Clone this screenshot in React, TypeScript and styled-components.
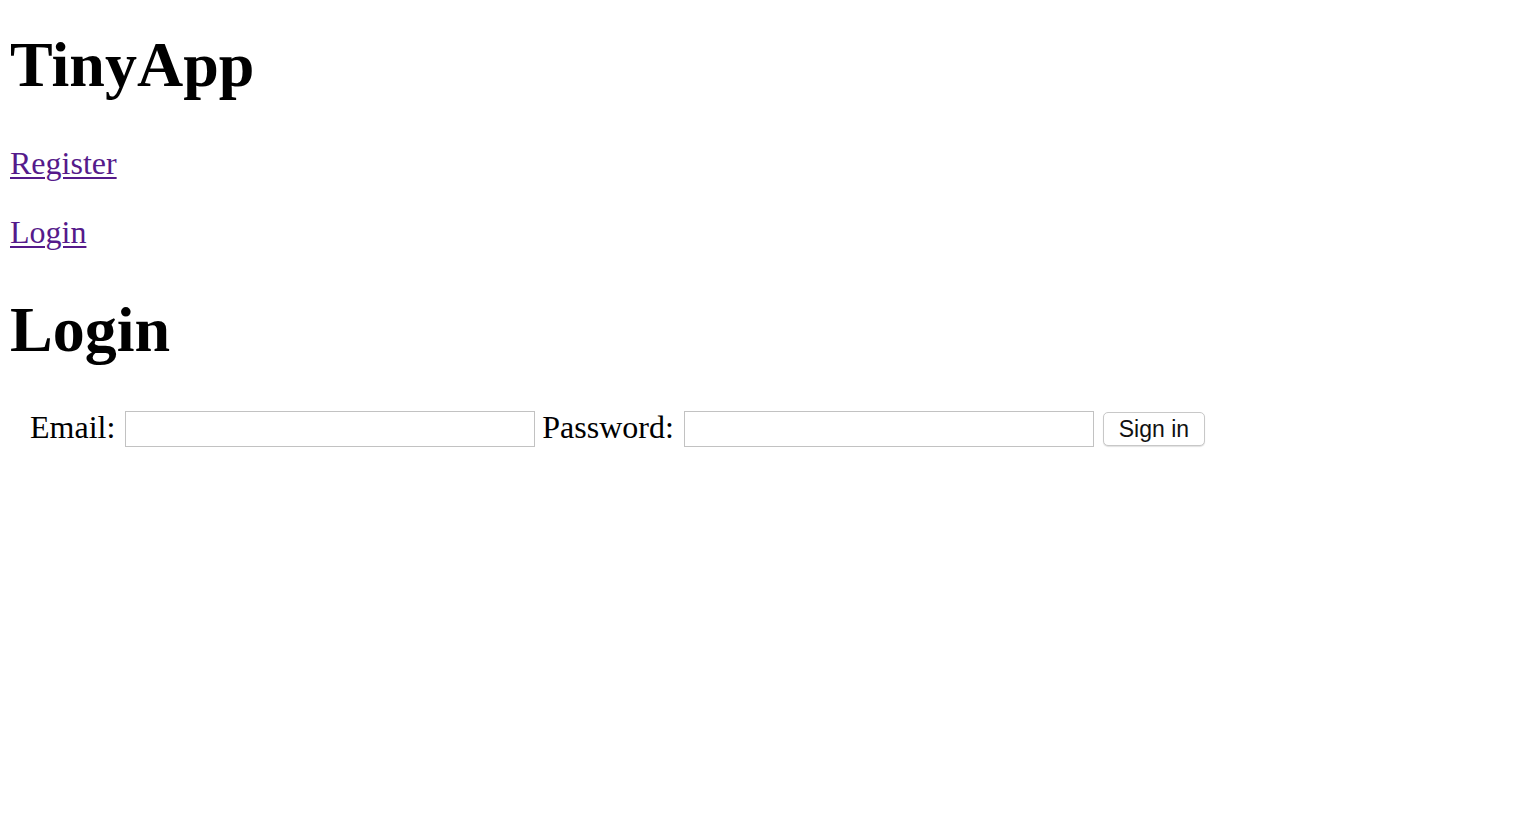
import React from "react";
import styled, { createGlobalStyle } from "styled-components";

const GlobalStyle = createGlobalStyle`
  html, body {
    margin: 0;
    padding: 0;
    background: #ffffff;
  }
  body {
    font-family: "Liberation Serif", "Times New Roman", serif;
    color: #000000;
  }
`;

const Page = styled.div`
  padding: 1px 10px 0;
  font-size: 32px;
`;

const Heading = styled.h1<{ $top: number; $bottom: number }>`
  font-size: 64px;
  font-weight: bold;
  margin: ${(p) => p.$top}px 0 ${(p) => p.$bottom}px;
  line-height: normal;
`;

const NavItem = styled.p`
  margin: 32px 0;
  line-height: normal;
`;

const NavLink = styled.a`
  color: #551a8b;
  text-decoration: underline;
  text-underline-offset: 3px;
  text-decoration-thickness: 2px;
`;

const LoginForm = styled.form`
  display: flex;
  align-items: center;
  padding-left: 20px;
  margin: 0;
`;

const FieldLabel = styled.label`
  font-size: 32px;
  margin: 0 10px 4px 0;
  line-height: 36px;
`;

const TextInput = styled.input`
  box-sizing: border-box;
  width: 410px;
  height: 36px;
  margin: 0 7px 0 0;
  padding: 2px 6px;
  border: 1px solid #c2c2c2;
  background: #ffffff;
  font-size: 20px;
  outline: none;
`;

const SignInButton = styled.button`
  box-sizing: border-box;
  width: 102px;
  height: 34px;
  margin-left: 2px;
  padding: 0 8px;
  border: 1px solid #c8c8c8;
  border-radius: 5px;
  background: #ffffff;
  box-shadow: 0 1px 1px rgba(0, 0, 0, 0.12);
  font-family: "Liberation Sans", Arial, sans-serif;
  font-size: 23px;
  color: #111111;
  cursor: pointer;
`;

export default function App() {
  return (
    <>
      <GlobalStyle />
      <Page>
        <Heading $top={27} $bottom={43}>TinyApp</Heading>
        <NavItem>
          <NavLink href="#register">Register</NavLink>
        </NavItem>
        <NavItem>
          <NavLink href="#login">Login</NavLink>
        </NavItem>
        <Heading $top={42} $bottom={42}>Login</Heading>
        <LoginForm onSubmit={(e) => e.preventDefault()}>
          <FieldLabel htmlFor="email">Email:</FieldLabel>
          <TextInput id="email" type="email" name="email" />
          <FieldLabel htmlFor="password">Password:</FieldLabel>
          <TextInput id="password" type="password" name="password" />
          <SignInButton type="submit">Sign in</SignInButton>
        </LoginForm>
      </Page>
    </>
  );
}
